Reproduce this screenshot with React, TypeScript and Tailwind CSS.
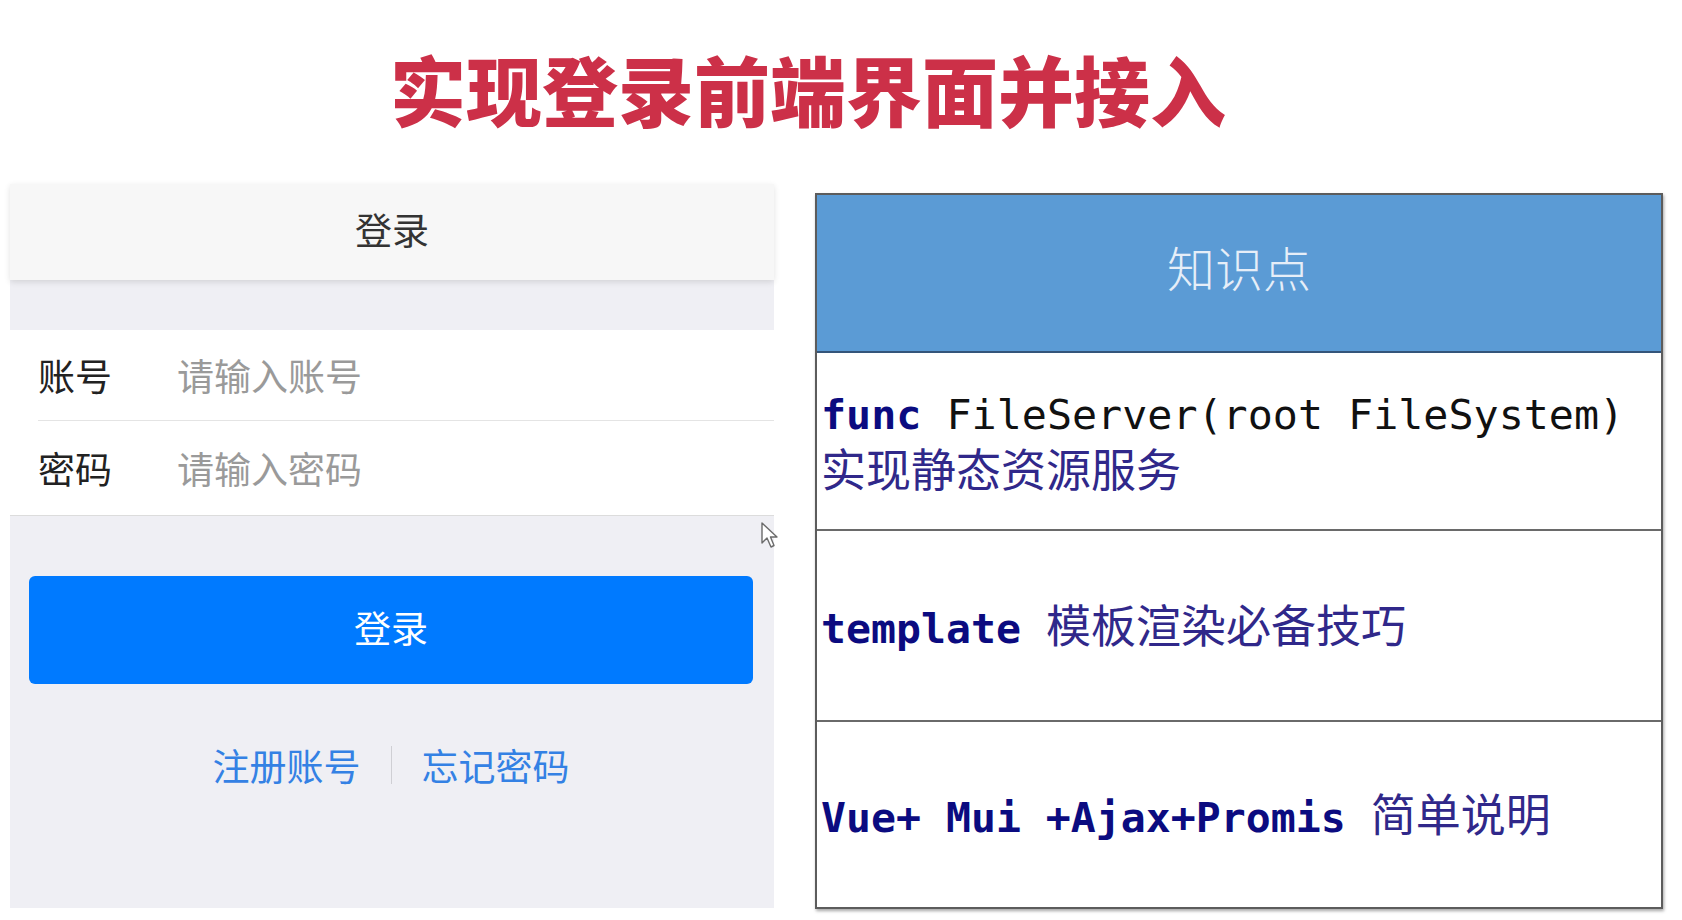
const cjk = '"Noto Sans CJK SC", "Noto Sans", sans-serif';
const mono = '"DejaVu Sans Mono", "Liberation Mono", "Noto Sans CJK SC", monospace';

function Cursor() {
  return (
    <svg
      className="absolute left-[760px] top-[521px]"
      width="20"
      height="28"
      viewBox="0 0 20 28"
    >
      <path
        d="M2 2 L2 22 L7 17 L11 26 L14 24.5 L10.5 16 L17 16 Z"
        fill="#ffffff"
        stroke="#6b6b6b"
        strokeWidth="1.4"
        strokeLinejoin="round"
      />
    </svg>
  );
}

function LoginPanel() {
  return (
    <div className="w-[764px] h-[724px] bg-[#efeff4] flex flex-col" style={{ fontFamily: cjk }}>
      <div className="h-[96px] bg-[#f7f7f7] shadow-[0_2px_6px_rgba(0,0,0,0.12)] flex items-center justify-center pb-[5px] text-[37px] leading-none text-[#333]">
        登录
      </div>

      <div className="mt-[50px] bg-white border-b border-[#dcdcdc]">
        <div className="h-[90px] flex items-center pl-[28px] text-[37px] leading-none">
          <span className="w-[139px] text-[#222]">账号</span>
          <span className="text-[#9a9a9a]">请输入账号</span>
        </div>
        <div className="ml-[28px] h-px bg-[#e4e4e4]" />
        <div className="h-[94px] flex items-center pl-[28px] text-[37px] leading-none">
          <span className="w-[139px] text-[#222]">密码</span>
          <span className="text-[#9a9a9a]">请输入密码</span>
        </div>
      </div>

      <button className="mt-[60px] ml-[19px] mr-[21px] h-[108px] rounded-md bg-[#007aff] text-white text-[37px] leading-none pb-[6px]">
        登录
      </button>

      <div className="mt-[62px] flex items-center justify-center text-[37px] leading-none text-[#3481e4] pr-[2px]">
        <span>注册账号</span>
        <span className="mx-[30px] w-px h-[38px] bg-[#cfcfd4]" />
        <span>忘记密码</span>
      </div>
    </div>
  );
}

function Row({ h, last, children }: { h: string; last?: boolean; children: React.ReactNode }) {
  return (
    <div className={`${h} ${last ? "" : "border-b-2 border-[#6a6a6a]"} flex items-center pl-[4px]`}>
      <div className="leading-[53px]">{children}</div>
    </div>
  );
}

function KnowledgeTable() {
  return (
    <div className="mt-[9px] ml-[41px] w-[848px] h-[716px] border-2 border-[#5c5c5c] shadow-[1px_2px_3px_rgba(0,0,0,0.35)] bg-white flex flex-col">
      <div
        className="h-[158px] bg-[#5b9bd5] border-b-2 border-[#34557a] flex items-center justify-center pb-[14px] text-[48px] leading-none text-[#e6eef8] font-light"
        style={{ fontFamily: cjk }}
      >
        知识点
      </div>

      <Row h="h-[178px]">
        <div className="text-[41.7px] whitespace-pre" style={{ fontFamily: mono }}>
          <span className="font-bold text-[#0b0b80]">func</span>
          <span className="text-[#111]"> FileServer(root FileSystem)</span>
        </div>
        <div className="text-[45px] text-[#30288a]" style={{ fontFamily: cjk }}>
          实现静态资源服务
        </div>
      </Row>

      <Row h="h-[191px]">
        <div className="whitespace-pre flex items-baseline">
          <span className="text-[41.5px] font-bold text-[#0b0b80]" style={{ fontFamily: mono }}>
            template{" "}
          </span>
          <span className="text-[45px] text-[#30288a]" style={{ fontFamily: cjk }}>
            模板渲染必备技巧
          </span>
        </div>
      </Row>

      <Row h="flex-1" last>
        <div className="whitespace-pre flex items-baseline">
          <span className="text-[41.5px] font-bold text-[#0b0b80]" style={{ fontFamily: mono }}>
            Vue+ Mui +Ajax+Promis{" "}
          </span>
          <span className="text-[45px] text-[#30288a]" style={{ fontFamily: cjk }}>
            简单说明
          </span>
        </div>
      </Row>
    </div>
  );
}

export default function App() {
  return (
    <main className="relative w-[1682px] h-[920px] bg-white overflow-hidden">
      <div
        className="h-[184px] pt-[50px] pl-[390px] text-[76px] leading-none font-black text-[#cc3048]"
        style={{ fontFamily: cjk }}
      >
        实现登录前端界面并接入
      </div>

      <div className="flex pl-[10px]">
        <LoginPanel />
        <KnowledgeTable />
      </div>

      <Cursor />
    </main>
  );
}
